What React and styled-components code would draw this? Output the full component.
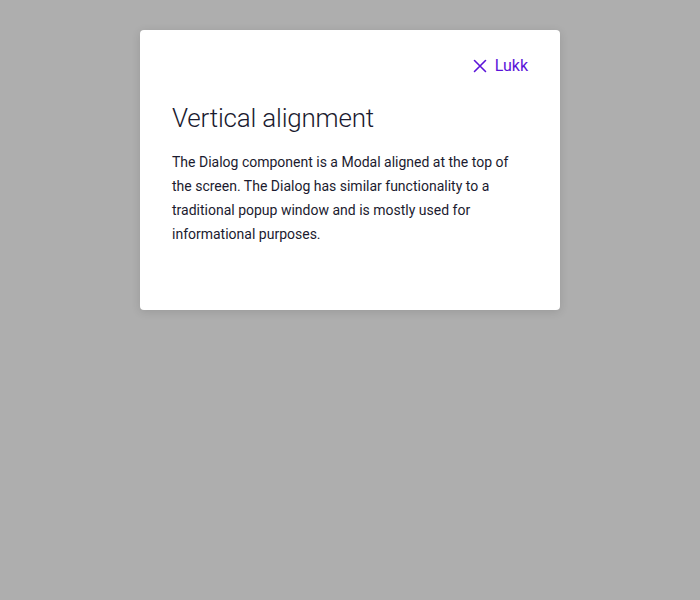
import React from "react";
import styled, { createGlobalStyle } from "styled-components";

const Global = createGlobalStyle`
  html, body { margin: 0; padding: 0; background: #aeaeae; }
  body { font-family: Roboto, "Liberation Sans", sans-serif; }
  * { box-sizing: border-box; }
`;

const Backdrop = styled.div`
  width: 700px;
  height: 600px;
  background: #aeaeae;
  display: flex;
  justify-content: center;
  align-items: flex-start;
  padding-top: 30px;
`;

const Dialog = styled.div`
  width: 420px;
  min-height: 280px;
  background: #ffffff;
  border-radius: 4px;
  box-shadow: 0 2px 10px rgba(0, 0, 0, 0.12);
  padding: 24px 32px 64px;
  display: flex;
  flex-direction: column;
`;

const TopRow = styled.div`
  display: flex;
  justify-content: flex-end;
`;

const CloseButton = styled.button`
  display: inline-flex;
  align-items: center;
  gap: 8px;
  height: 24px;
  padding: 0;
  border: none;
  background: none;
  color: #5b14d9;
  font-family: Roboto, "Liberation Sans", sans-serif;
  font-size: 16px;
  line-height: 24px;
  cursor: pointer;
`;

const Title = styled.h2`
  margin: 24px 0 16px;
  font-family: Roboto, "Liberation Sans", sans-serif;
  font-weight: 300;
  font-size: 26px;
  line-height: 32px;
  letter-spacing: -0.2px;
  color: #1b1b2f;
`;

const Body = styled.p`
  margin: 0;
  font-family: Roboto, "Liberation Sans", sans-serif;
  font-size: 14px;
  line-height: 24px;
  color: #1b1b2f;
`;

export default function App() {
  return (
    <>
      <Global />
      <Backdrop>
        <Dialog>
          <TopRow>
            <CloseButton>
              <svg width="14" height="14" viewBox="0 0 14 14" fill="none">
                <path d="M1.5 1.5L12.5 12.5M12.5 1.5L1.5 12.5" stroke="currentColor" strokeWidth="1.6" strokeLinecap="round" />
              </svg>
              Lukk
            </CloseButton>
          </TopRow>
          <Title>Vertical alignment</Title>
          <Body>
            The Dialog component is a Modal aligned at the top of the screen. The Dialog has similar functionality to a traditional popup window and is mostly used for informational purposes.
          </Body>
        </Dialog>
      </Backdrop>
    </>
  );
}
